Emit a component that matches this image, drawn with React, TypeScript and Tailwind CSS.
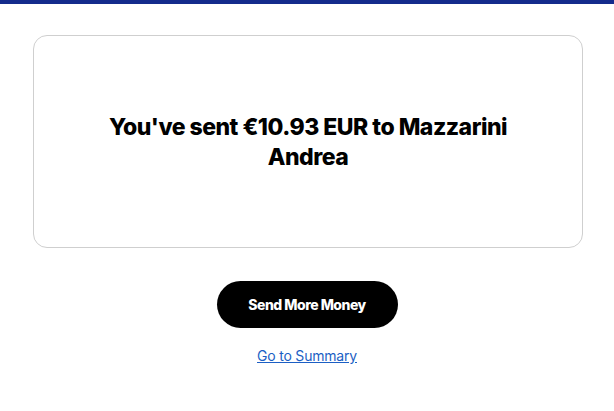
export default function App() {
  return (
    <div className="min-h-[411px] bg-white" style={{ fontFamily: 'Inter, "Noto Sans", sans-serif' }}>
      <div className="h-[4px] bg-[#142b8c]" />
      <div className="pl-[33px] pt-[31px]">
        <div className="flex h-[213px] w-[550px] items-center justify-center rounded-[14px] border border-[#cfcfcf] px-[60px]">
          <h1 className="text-center text-[23px] font-extrabold leading-[30px] tracking-[-0.5px] text-black">
            You've sent €10.93 EUR to Mazzarini Andrea
          </h1>
        </div>
      </div>
      <div className="mt-[33px] flex flex-col items-center">
        <button className="h-[47px] w-[181px] rounded-full bg-black text-[14px] font-extrabold tracking-[-0.5px] text-white">
          Send More Money
        </button>
        <a href="#" className="mt-[18px] text-[14px] leading-[20px] tracking-[-0.2px] text-[#1c5fc4] underline">
          Go to Summary
        </a>
      </div>
    </div>
  )
}
